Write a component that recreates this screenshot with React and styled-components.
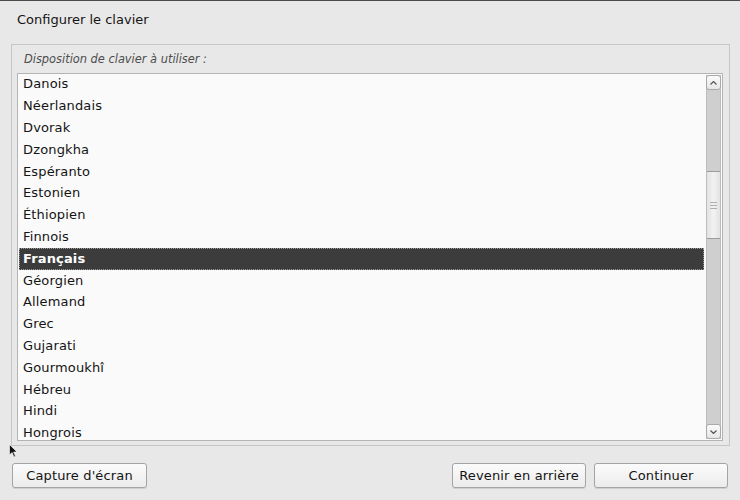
import React from 'react'
import styled, { createGlobalStyle } from 'styled-components'

const GlobalStyle = createGlobalStyle`
    html, body {
        margin: 0;
        padding: 0;
        background: #e8e8e8;
    }
    body {
        font-family: "DejaVu Sans", "Liberation Sans", sans-serif;
        color: #141414;
    }
`

const Page = styled.div`
    position: relative;
    width: 740px;
    height: 500px;
    box-sizing: border-box;
    border-top: 1px solid #4a4a4a;
    display: flex;
    flex-direction: column;
    overflow: hidden;
`

const Title = styled.div`
    height: 36px;
    padding-left: 17px;
    display: flex;
    align-items: center;
    font-size: 13px;
    box-sizing: border-box;
    padding-top: 1px;
`

const Frame = styled.section`
    margin: 7px 10px 0 11px;
    border: 1px solid #c6c6c6;
    padding: 0 6px 4px 5px;
    display: flex;
    flex-direction: column;
`

const Label = styled.div`
    height: 28px;
    display: flex;
    align-items: center;
    padding-left: 7px;
    font-style: italic;
    font-size: 11.4px;
    color: #4d4d4d;
`

const ListBox = styled.div`
    height: 366px;
    border: 1px solid #b4b4b4;
    background: #fafafa;
    display: flex;
`

const List = styled.ul`
    flex: 1;
    margin: 0;
    padding: 0;
    list-style: none;
    overflow: hidden;
`

const Row = styled.li`
    height: 21.8px;
    margin: 0 1px;
    padding-left: 4px;
    padding-bottom: 2px;
    display: flex;
    align-items: center;
    box-sizing: border-box;
    font-size: 13px;
    letter-spacing: 0.15px;
    color: ${p => (p.$selected ? '#ffffff' : '#141414')};
    font-weight: ${p => (p.$selected ? 'bold' : 'normal')};
    background: ${p => (p.$selected ? '#3c3c3c' : 'transparent')};
    outline: ${p => (p.$selected ? '1px dotted #9a9a9a' : 'none')};
    outline-offset: -1px;
`

const Scrollbar = styled.div`
    width: 13px;
    margin: 1px;
    display: flex;
    flex-direction: column;
    background: #cfcfcf;
    border-left: 1px solid #bdbdbd;
    border-right: 1px solid #bdbdbd;
`

const Arrow = styled.div`
    height: 13px;
    background: linear-gradient(#fbfbfb, #e6e6e6);
    border: 1px solid #a9a9a9;
    border-radius: 3px;
    margin: 0 -1px;
    display: flex;
    align-items: center;
    justify-content: center;
`

const Track = styled.div`
    flex: 1;
    display: flex;
    flex-direction: column;
`

const Gap = styled.div`
    height: ${p => p.$h}px;
`

const Thumb = styled.div`
    height: 66px;
    background: linear-gradient(90deg, #e2e2e2, #f2f2f2, #e2e2e2);
    border-top: 1px solid #9c9c9c;
    border-bottom: 1px solid #9c9c9c;
    display: flex;
    flex-direction: column;
    align-items: center;
    justify-content: center;
    gap: 2px;
`

const Grip = styled.span`
    width: 7px;
    height: 1px;
    background: #b0b0b0;
`

const Footer = styled.div`
    display: flex;
    align-items: center;
    padding: 17px 12px 0 12px;
    gap: 8px;
`

const Spacer = styled.div`
    flex: 1;
`

const Button = styled.button`
    width: ${p => p.$w}px;
    height: 25px;
    border: 1px solid #a4a4a4;
    border-radius: 3px;
    background: linear-gradient(#fbfbfb, #ececec);
    font-family: "DejaVu Sans", "Liberation Sans", sans-serif;
    font-size: 13px;
    letter-spacing: 0.15px;
    color: #141414;
    padding: 0;
    box-shadow: 0 1px 0 #d0d0d0;
`

const Cursor = styled.svg`
    position: absolute;
    left: 9px;
    top: 443px;
`

const layouts = [
    'Danois', 'Néerlandais', 'Dvorak', 'Dzongkha', 'Espéranto', 'Estonien',
    'Éthiopien', 'Finnois', 'Français', 'Géorgien', 'Allemand', 'Grec',
    'Gujarati', 'Gourmoukhî', 'Hébreu', 'Hindi', 'Hongrois',
]

const App = () => {
    return (
        <Page>
            <GlobalStyle />
            <Title>Configurer le clavier</Title>
            <Frame>
                <Label>Disposition de clavier à utiliser :</Label>
                <ListBox>
                    <List>
                        {layouts.map(name => (
                            <Row key={name} $selected={name === 'Français'}>{name}</Row>
                        ))}
                    </List>
                    <Scrollbar>
                        <Arrow>
                            <svg width="7" height="4" viewBox="0 0 7 4">
                                <path d="M0.5 3.5 L3.5 0.5 L6.5 3.5" fill="none" stroke="#555" strokeWidth="1.2" />
                            </svg>
                        </Arrow>
                        <Track>
                            <Gap $h={81} />
                            <Thumb>
                                <Grip />
                                <Grip />
                                <Grip />
                            </Thumb>
                        </Track>
                        <Arrow>
                            <svg width="7" height="4" viewBox="0 0 7 4">
                                <path d="M0.5 0.5 L3.5 3.5 L6.5 0.5" fill="none" stroke="#555" strokeWidth="1.2" />
                            </svg>
                        </Arrow>
                    </Scrollbar>
                </ListBox>
            </Frame>
            <Footer>
                <Button $w={135}>Capture d'écran</Button>
                <Spacer />
                <Button $w={134}>Revenir en arrière</Button>
                <Button $w={134}>Continuer</Button>
            </Footer>
            <Cursor width="9" height="15" viewBox="0 0 9 15">
                <path d="M0.5 0.5 L0.5 11 L3 8.5 L5 13 L6.5 12.3 L4.6 8 L8 8 Z" fill="#111" stroke="#fff" strokeWidth="0.6" />
            </Cursor>
        </Page>
    )
}

export default App
